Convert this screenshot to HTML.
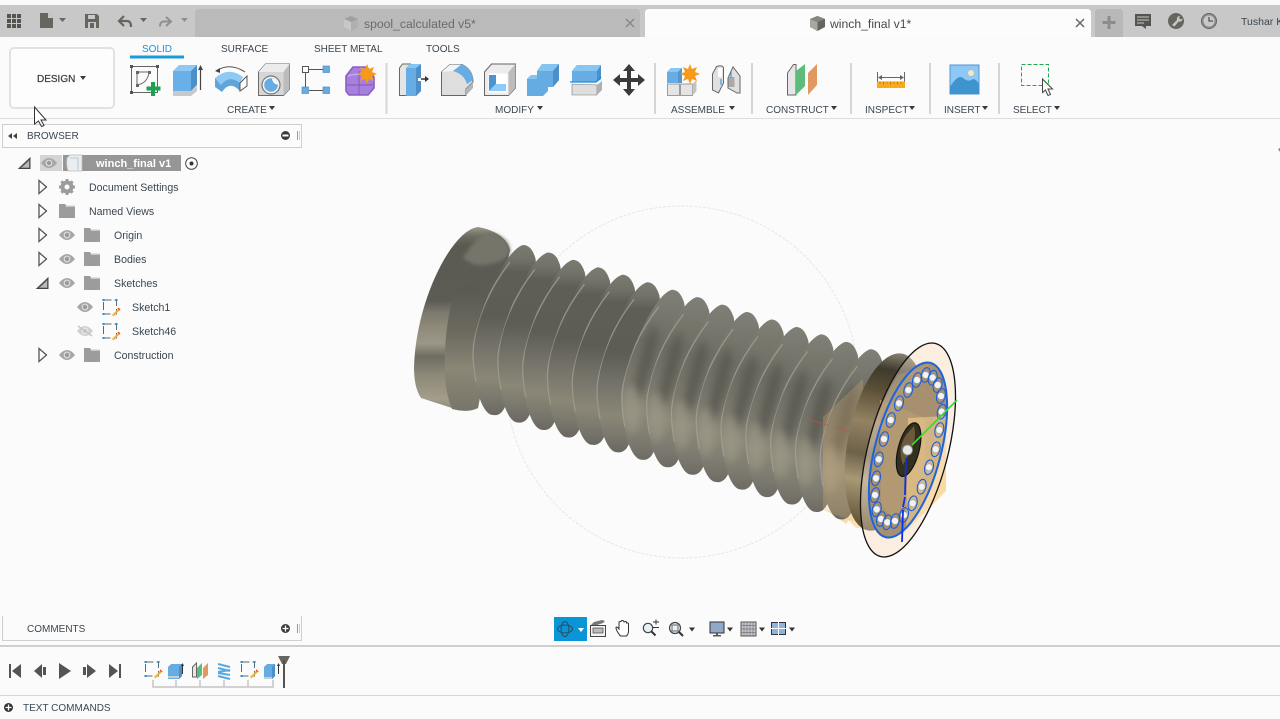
<!DOCTYPE html>
<html><head><meta charset="utf-8"><title>winch_final v1</title>
<style>
html,body{margin:0;padding:0;background:#fbfbfb;width:1280px;height:720px;overflow:hidden}
svg{display:block;position:absolute;left:0;top:0}
text{font-family:"Liberation Sans",Arial,sans-serif;font-size:10px;fill:#3c4650}
.t{font-size:10.6px}
</style></head><body>
<svg width="1280" height="720" viewBox="0 0 1280 720" xmlns="http://www.w3.org/2000/svg">
<defs>
<linearGradient id="gA" gradientUnits="userSpaceOnUse" x1="0" y1="245" x2="0" y2="416">
<stop offset="0" stop-color="#7b7b71"/><stop offset=".08" stop-color="#727269"/><stop offset=".16" stop-color="#5f5e56"/><stop offset=".42" stop-color="#5e5d55"/><stop offset=".6" stop-color="#75736a"/><stop offset=".78" stop-color="#8b8777"/><stop offset=".92" stop-color="#77756b"/><stop offset="1" stop-color="#68665e"/>
</linearGradient>
<linearGradient id="gB" gradientUnits="userSpaceOnUse" x1="0" y1="245" x2="0" y2="416">
<stop offset="0" stop-color="#808076"/><stop offset=".14" stop-color="#77776d"/><stop offset=".3" stop-color="#6f6e65"/><stop offset=".55" stop-color="#7d7a6f"/><stop offset=".72" stop-color="#8d897a"/><stop offset=".9" stop-color="#7b796f"/><stop offset="1" stop-color="#6c6a61"/>
</linearGradient>
<linearGradient id="capG" gradientUnits="userSpaceOnUse" x1="0" y1="227" x2="0" y2="412">
<stop offset="0" stop-color="#9a9988"/><stop offset=".05" stop-color="#6d6c62"/><stop offset=".1" stop-color="#5b5a52"/><stop offset=".4" stop-color="#5d5c54"/><stop offset=".46" stop-color="#7b786d"/><stop offset=".54" stop-color="#8f8979"/><stop offset=".63" stop-color="#9b9789"/><stop offset=".7" stop-color="#6f6c62"/><stop offset=".8" stop-color="#8e8977"/><stop offset=".93" stop-color="#a39d8b"/><stop offset="1" stop-color="#8a8675"/>
</linearGradient>
<linearGradient id="secG" gradientUnits="userSpaceOnUse" x1="0" y1="290" x2="0" y2="412">
<stop offset="0" stop-color="#5b5a52"/><stop offset=".35" stop-color="#6c6a60"/><stop offset=".65" stop-color="#8b8675"/><stop offset="1" stop-color="#77746a"/>
</linearGradient>
<linearGradient id="hubG" gradientUnits="userSpaceOnUse" x1="0" y1="352" x2="0" y2="535">
<stop offset="0" stop-color="#87816f"/><stop offset=".1" stop-color="#403a2c"/><stop offset=".22" stop-color="#5b5036"/><stop offset=".4" stop-color="#938263"/><stop offset=".58" stop-color="#6e624a"/><stop offset=".72" stop-color="#a79876"/><stop offset=".86" stop-color="#7f714f"/><stop offset="1" stop-color="#54462a"/>
</linearGradient>
<filter id="bl" x="-100%" y="-50%" width="300%" height="200%"><feGaussianBlur stdDeviation="4"/></filter>
<filter id="bs" x="-20%" y="-20%" width="140%" height="140%"><feGaussianBlur stdDeviation="1.800"/></filter>
<clipPath id="finClip"><path d="M523 245C505 250 478 310 472 350C473 385 482 415 493 415C505 417 508 400 512 380C522 330 540 270 535 257C532 248 528 245 523 245Z"/></clipPath>
<g id="finA">
<path d="M523 245C505 250 478 310 472 350C473 385 482 415 493 415C505 417 508 400 512 380C522 330 540 270 535 257C532 248 528 245 523 245Z" fill="url(#gA)"/>
<g clip-path="url(#finClip)">
<path d="M510 262C492 285 475 318 473 352C473 362 474 372 476 382" fill="none" stroke="#a09f92" stroke-width="1.400" opacity=".8"/>
</g>
</g>
<g id="finB">
<path d="M523 245C505 250 478 310 472 350C473 385 482 415 493 415C505 417 508 400 512 380C522 330 540 270 535 257C532 248 528 245 523 245Z" fill="url(#gB)"/>
<g clip-path="url(#finClip)">
<ellipse cx="497" cy="318" rx="7" ry="38" transform="rotate(14 497 318)" fill="#55554d" opacity=".72" filter="url(#bl)"/>
<ellipse cx="483" cy="365" rx="9" ry="24" fill="#a09b8a" opacity=".6" filter="url(#bl)"/>
<path d="M510 262C492 285 475 318 473 352C473 362 474 372 476 382" fill="none" stroke="#a2a195" stroke-width="1.300" opacity=".8"/>
</g>
</g>
<g id="eye"><path d="M-8 0Q0-10 8 0Q0 10-8 0Z" fill="#a6a6a6"/><circle r="3.400" fill="#dedede"/><circle r="2.200" fill="#999"/></g>
<g id="folder"><path d="M-8-7h6l1 1.500h9V7H-8Z" fill="#9c9c9c"/><rect x="-1" y="-5.500" width="9" height="1.500" fill="#c8c8c8"/></g>
<g id="tri"><path d="M-4-6.500L3.500 0L-4 6.500Z" fill="#fdfdfd" stroke="#555" stroke-width="1.300"/></g>
<g id="open"><path d="M-6 5.500L5-5V5.500Z" fill="#777" stroke="#444" stroke-width="1"/><path d="M-3 4.500L4-2V4.500Z" fill="#bbb"/></g>
<g id="sk"><rect x="-6.500" y="-7" width="13" height="14" fill="none" stroke="#666" stroke-width="1" stroke-dasharray="8 3"/><path d="M-7.500-8h2v2h-2zM5.500-8h2v2h-2zM-7.500 6h2v2h-2z" fill="#1f8fe0"/><path d="M2 8l6-6 1.500 1.500-6 6z" fill="#f3b23a"/><path d="M7.500 1.500l2 2 1-1-2-2z" fill="#e43"/></g>
<path id="cr" d="M0 0h6l-3 4z" fill="#3a3a3a"/>
<g id="ball"><ellipse rx="4.300" ry="7.500" fill="none" stroke="#1c5fd8" stroke-width="1.100"/><circle r="3.400" fill="#f2f3f5" stroke="#9aa0a6" stroke-width=".5"/></g>
</defs>

<rect width="1280" height="720" fill="#fbfbfb"/>
<!-- top bar -->
<rect y="5" width="1280" height="32" fill="#c8c8c8"/>
<path d="M195 37V13q0-4 4-4H636q4 0 4 4V37Z" fill="#bababa"/>
<path d="M645 37V13q0-4 4-4H1087q4 0 4 4V37Z" fill="#fcfcfc"/>
<path d="M1095 37V13q0-4 4-4h20q4 0 4 4V37Z" fill="#b8b8b8"/>
<path d="M1104 21h5v-5h3v5h5v3h-5v5h-3v-5h-5z" transform="translate(-1.500 0)" fill="#8c8c8c"/>
<g fill="#55554f"><rect x="7" y="14" width="4" height="4"/><rect x="12" y="14" width="4" height="4"/><rect x="17" y="14" width="4" height="4"/><rect x="7" y="19" width="4" height="4"/><rect x="12" y="19" width="4" height="4"/><rect x="17" y="19" width="4" height="4"/><rect x="7" y="24" width="4" height="4"/><rect x="12" y="24" width="4" height="4"/><rect x="17" y="24" width="4" height="4"/></g>
<path d="M40 13h8l5 5v10H40Z" fill="#66665f"/><path d="M48 13v5h5" fill="#c8c8c8"/>
<path d="M59 18h7l-3.500 4z" fill="#66665f"/>
<path d="M85 14h12l2 2v12H85Z" fill="#66665f"/><rect x="88" y="15" width="7" height="4" fill="#c8c8c8"/><rect x="88" y="22" width="8" height="6" fill="#c8c8c8"/><rect x="90" y="23" width="4" height="5" fill="#66665f"/>
<path d="M124 16l-5 5 5 5M119 21h8q4 0 4 6" fill="none" stroke="#66665f" stroke-width="2.200"/>
<path d="M140 18h7l-3.500 4z" fill="#66665f"/>
<path d="M166 17l5 4.500-5 4.500M171 21.500h-7q-4 0-4 5" fill="none" stroke="#8f8f8f" stroke-width="2"/>
<path d="M181 18h7l-3.500 4z" fill="#8f8f8f"/>
<path d="M344 19l7-3 7 3v8l-7 4-7-4z" fill="#a0a0a0"/><path d="M344 19l7 3 7-3v8l-7 4z" fill="#b0b0b0"/><path d="M344 19l7 3v9l-7-4z" fill="#c8c8c8"/>
<path d="M810 19l7.500-3 7.500 3v8l-7.500 4-7.500-4z" fill="#66665f"/><path d="M810 19l7.500 3v9l-7.500-4z" fill="#a8a8a2"/><path d="M810 19l7.500 3 7.500-3-7.500-3z" fill="#868680"/>
<text x="364" y="28" style="font-size:12.200px;fill:#6a6a6a">spool_calculated v5*</text>
<text x="830" y="28" style="font-size:12.200px;fill:#4a4a4a">winch_final v1*</text>
<path d="M626 19l8 8M634 19l-8 8" stroke="#8a8a8a" stroke-width="1.500"/>
<path d="M1076 19l8 8M1084 19l-8 8" stroke="#666" stroke-width="1.500"/>
<path d="M1135 14h16v12h-5v3l-4-3h-7z" fill="#55554f"/><path d="M1137 17h12M1137 20h12M1137 23h7" stroke="#c8c8c8"/>
<circle cx="1176" cy="21" r="8" fill="#66665f"/><path d="M1172 25l5-5a3 3 0 0 1 3-4l-1 2 1.500 1.500 2-1a3 3 0 0 1-4 3l-4 5z" fill="#c8c8c8"/>
<circle cx="1209" cy="21" r="7.500" fill="#8f8f8f" stroke="#66665f" stroke-width="1"/><circle cx="1209" cy="21" r="5.500" fill="#c8c8c8"/><path d="M1209 17v4h4" fill="none" stroke="#55554f" stroke-width="1.300"/>
<text x="1241" y="25" style="font-size:10.500px;fill:#3c4650">Tushar K</text>

<!-- toolbar -->
<rect x="10" y="48" width="104" height="60" rx="4" fill="#fdfdfd" stroke="#e2e2e2" stroke-width="2"/>
<text x="37" y="82" style="font-size:10px;fill:#3f3f3f;stroke:#3f3f3f;stroke-width:.25">DESIGN</text>
<use href="#cr" x="80" y="76"/>
<rect y="118" width="1280" height="1" fill="#dedede"/>
<text x="142" y="52" style="fill:#1b91dc">SOLID</text>
<text x="221" y="52">SURFACE</text>
<text x="314" y="52">SHEET METAL</text>
<text x="426" y="52">TOOLS</text>
<rect x="130" y="55.500" width="54" height="3" fill="#1a9ad9"/>
<text x="227" y="113">CREATE</text><use href="#cr" x="269" y="106"/>
<text x="495" y="113">MODIFY</text><use href="#cr" x="537" y="106"/>
<text x="671" y="113">ASSEMBLE</text><use href="#cr" x="729" y="106"/>
<text x="766" y="113">CONSTRUCT</text><use href="#cr" x="831" y="106"/>
<text x="865" y="113">INSPECT</text><use href="#cr" x="909" y="106"/>
<text x="944" y="113">INSERT</text><use href="#cr" x="982" y="106"/>
<text x="1013" y="113">SELECT</text><use href="#cr" x="1054" y="106"/>
<g fill="#d6d6d6"><rect x="385.500" y="63" width="2" height="51"/><rect x="654" y="63" width="2" height="51"/><rect x="751" y="63" width="2" height="51"/><rect x="850" y="63" width="2" height="51"/><rect x="929" y="63" width="2" height="51"/><rect x="998" y="63" width="2" height="51"/></g>

<!-- create sketch -->
<rect x="131.500" y="66.500" width="26" height="26" fill="none" stroke="#666" stroke-width="1"/>
<path d="M130 65h3v3h-3zM156 65h3v3h-3zM130 91h3v3h-3z" fill="#555"/>
<path d="M137 72h12M137 72v13M149 72q-1 11-12 13" fill="none" stroke="#666" stroke-width="1"/>
<path d="M136 71h3v3h-3zM148 71h3v3h-3zM136 84h3v3h-3z" fill="#666"/>
<path d="M151 82h4v4.500h5.500v4H155V96h-4v-5.500h-4.500v-4H151z" fill="#1fa04c"/>
<!-- extrude -->
<rect x="173" y="71" width="18" height="20" fill="#6ab0e8"/>
<path d="M173 71l6-6h18l-6 6z" fill="#8ec8f5"/><path d="M191 71l6-6v20l-6 6z" fill="#4d8fc8"/>
<path d="M173 91h18l6-5v5l-6 5h-18z" fill="#c9c9c9"/>
<path d="M200.500 90V68" stroke="#444" stroke-width="1.200"/><path d="M198 70l2.500-5 2.500 5z" fill="#444"/>
<!-- revolve -->
<path d="M216 71Q230 62 245 72" fill="none" stroke="#555" stroke-width="1"/><path d="M215 71l5-3v5z" fill="#444"/>
<path d="M215 78Q229 66 243 77L240 83Q229 74 221 85Z" fill="#8fcaf4"/>
<path d="M215 78L221 85Q229 74 240 83V91Q230 80 222 92L215 87Z" fill="#5ea5dc"/>
<path d="M240 83L247 76V86L240 91Z" fill="#fff" stroke="#555" stroke-width="1"/>
<!-- hole -->
<path d="M258.500 72l7-8h24v25l-6 6.500h-25z" fill="#d6d6d6" stroke="#6a6a6a" stroke-width="1"/>
<path d="M283.500 72l6-8v25l-6 6.500z" fill="#bcbcbc"/><path d="M258.500 72l7-8h24l-6 8z" fill="#ececec"/>
<circle cx="271" cy="85" r="9" fill="#f2f2f2" stroke="#777" stroke-width="1.200"/><circle cx="271" cy="85" r="6.800" fill="#65ace4"/><path d="M272 78.500a7 7 0 0 1 6 6q-5 0-6-6z" fill="#fff"/>
<!-- pattern -->
<rect x="302.500" y="66.500" width="6" height="6" fill="#fff" stroke="#555"/>
<rect x="323" y="66" width="6.500" height="6.500" fill="#65ace4" stroke="#4a8fc8" stroke-width=".7"/><rect x="302" y="87" width="6.500" height="6.500" fill="#65ace4" stroke="#4a8fc8" stroke-width=".7"/><rect x="323" y="87" width="6.500" height="6.500" fill="#65ace4" stroke="#4a8fc8" stroke-width=".7"/>
<path d="M309 69.500h14M309 90.500h14M305.500 73v14" stroke="#555" stroke-width="1"/>
<!-- purple -->
<path d="M346 76l7-9h14l7 10v11l-6 7h-19l-3-4z" fill="#a77fdc" stroke="#8a5fc4" stroke-width="1.600" stroke-linejoin="round"/>
<path d="M346 85h27M359 71v24" stroke="#8258bb" stroke-width=".9"/><path d="M348 76q11-4 21 1" fill="none" stroke="#c6a8ee" stroke-width="1.500"/>
<path d="M367 64l2 5 5-2-2 5 5 2-5 2 2 5-5-2-2 5-2-5-5 2 2-5-5-2 5-2-2-5 5 2z" fill="#f79a1c"/>
<!-- press pull -->
<path d="M399.500 95.500V68l3-4h8v31.500z" fill="#e5e5e5" stroke="#666" stroke-width="1"/>
<path d="M406 68l4-4h11v27l-5 5h-10z" fill="#67ace2"/><path d="M416 68l5-4v27l-5 5z" fill="#4d8fc8"/><path d="M406 68l4-4h11l-5 4z" fill="#85c3f1"/>
<path d="M419 79h7" stroke="#333" stroke-width="1.500"/><path d="M425 76l4 3-4 3z" fill="#333"/><rect x="418" y="78" width="3" height="3" fill="#fff"/>
<!-- fillet -->
<path d="M441.500 95.500V72L450 64.500H462Q473 70 473 82L466 89V95.500Z" fill="#dedede" stroke="#666" stroke-width="1"/>
<path d="M441.500 72L450 64.500H462L453 71Z" fill="#f4f4f4"/>
<path d="M453 71L462 64Q473 70 473 80L467 84Q464 74 453 71Z" fill="#67ace2"/>
<path d="M466 89L473 82V88L466 95.500Z" fill="#b5b5b5"/>
<!-- shell -->
<path d="M484.500 95.500V72l7-8h24v24l-7 7.500z" fill="#ececec" stroke="#666" stroke-width="1"/>
<path d="M508.500 72l7-8v24l-7 7.500z" fill="#bcbcbc"/>
<rect x="488.500" y="73.500" width="19" height="19" fill="#fff"/>
<path d="M489 75h7v9l-7 7z" fill="#4d93cf"/><path d="M489 91l7-7h10v7z" fill="#8ecaf6"/>
<!-- combine -->
<path d="M527 79l4-4h6V71l5-7h17V80l-6 7h-5V91l-5 5H527Z" fill="#65ace2"/>
<path d="M537 71l5-7h17l-6 7z" fill="#85c3f1"/><path d="M553 71l6-7v16l-6 7z" fill="#4d8fc8"/><path d="M527 79l4-4h6v4z" fill="#85c3f1"/>
<!-- offset plane -->
<path d="M572 71l5-6h24v14l-4 3h-25z" fill="#67ace2"/><path d="M572 71l5-6h24l-4 6z" fill="#88c6f4"/><path d="M597 71l4-6v14l-4 3z" fill="#4d8fc8"/>
<path d="M572 84v11h25v-10z" fill="#dedede" stroke="#777" stroke-width=".6"/><path d="M597 85l5-4v9l-5 5z" fill="#b0b0b0"/>
<path d="M570 82h26l5-5" fill="none" stroke="#1a8fe0" stroke-width="1.300"/>
<!-- move -->
<path d="M629 64l6 7h-4v7h7v-4l7 6-7 6v-4h-7v7h4l-6 7-6-7h4v-7h-7v4l-7-6 7-6v4h7v-7h-4z" fill="#3a3a3a"/>
<!-- assemble new -->
<path d="M667 72l4-4h11v15h-15z" fill="#67ace2"/><path d="M667 72l4-4h11l-4 4z" fill="#88c6f4"/><path d="M678 72l4-4v15h-4z" fill="#4d8fc8" opacity=".7"/>
<rect x="667.500" y="84" width="12" height="11.500" fill="#e4e4e4" stroke="#888" stroke-width=".8"/><rect x="680.500" y="84" width="12" height="11.500" fill="#e4e4e4" stroke="#888" stroke-width=".8"/><path d="M692.500 84l4-4v11l-4 4.500z" fill="#c4c4c4"/>
<path d="M690 64l2 5 5-2-2 5 5 2-5 2 2 5-5-2-2 5-2-5-5 2 2-5-5-2 5-2-2-5 5 2z" fill="#f79a1c"/>
<!-- joint -->
<path d="M712.500 74l4-7.500q5-2 7 1V83l-5 10-6-3z" fill="#e0e0e0" stroke="#666" stroke-width="1"/>
<path d="M728 78l5-11 7 9v17l-3 0-9-5z" fill="#e0e0e0" stroke="#666" stroke-width="1"/>
<rect x="728.500" y="77" width="6" height="10" fill="#aaa"/><rect x="718" y="68" width="4" height="9" fill="#fff"/>
<path d="M721 79v6M731 72v6" stroke="#1a8fe0"/>
<!-- construct -->
<path d="M787.500 95V73l6-8.500h2.500V95Z" fill="#e6e6e6" stroke="#666" stroke-width="1"/>
<path d="M796 71l9-7v22l-9 9z" fill="#5cbd7b"/>
<path d="M808 73l9-9v21l-9 10z" fill="#e09a60"/>
<!-- inspect -->
<path d="M877.500 72v13M904.500 72v13M879 77.500h24" stroke="#666" stroke-width="1" fill="none"/><path d="M878 77.500l4-2.500v5zM904 77.500l-4-2.500v5z" fill="#666"/>
<rect x="877" y="81.500" width="28" height="6.500" fill="#f8aa18"/><path d="M880 81.500v2M883.500 81.500v3M887 81.500v2M890.500 81.500v3M894 81.500v2M897.500 81.500v3M901 81.500v2" stroke="#a06a10" stroke-width=".7"/>
<!-- insert -->
<rect x="950" y="65" width="29" height="29" fill="#8ec8f6" stroke="#4f96d2" stroke-width="1"/>
<path d="M950 87q8-13 13-9t8 2q4-3 8 4v10h-29z" fill="#3f93ce"/>
<circle cx="971" cy="73" r="3.300" fill="#efe8d0" stroke="#b8bab0" stroke-width=".6"/>
<!-- select -->
<rect x="1021.500" y="64.500" width="27" height="21" fill="none" stroke="#21a84f" stroke-width="1" stroke-dasharray="4 2"/>
<path d="M1042.500 79v13.500l3-2.500 2.500 5.500 2.500-1-2.500-5.500h4.500z" fill="#fff" stroke="#444" stroke-width="1"/>

<!-- browser panel -->
<rect x="2.500" y="124.500" width="299" height="23" fill="#fcfcfc" stroke="#cfcfcf"/>
<path d="M12 133l-4 3 4 3zM17 133l-4 3 4 3z" fill="#444"/>
<text x="27" y="139">BROWSER</text>
<circle cx="285.500" cy="135.500" r="4.500" fill="#3a3a3a"/><rect x="282.500" y="134.500" width="6" height="2" fill="#fff"/>
<path d="M297.500 131v9" stroke="#999"/><path d="M299.500 131v9" stroke="#ccc"/>
<use href="#open" x="25" y="163"/>
<rect x="40" y="155" width="22" height="16" fill="#d4d4d4"/><rect x="63" y="155" width="118" height="16" fill="#969696"/>
<use href="#eye" x="49" y="163"/>
<path d="M67 158l3-3h12v16H68q-2-6-1-13z" fill="#e8eef2" stroke="#bbb" stroke-width=".7"/><path d="M70 158h8v12" fill="none" stroke="#bfc8cc"/>
<text x="96" y="167" style="font-size:11px;font-weight:bold;fill:#fff">winch_final v1</text>
<circle cx="191.500" cy="163.500" r="5.800" fill="#fff" stroke="#444" stroke-width="1"/><circle cx="191.500" cy="163.500" r="2" fill="#333"/>
<text class="t" x="89" y="191">Document Settings</text>
<text class="t" x="89" y="215">Named Views</text>
<text class="t" x="114" y="239">Origin</text>
<text class="t" x="114" y="263">Bodies</text>
<text class="t" x="114" y="287">Sketches</text>
<text class="t" x="132" y="311">Sketch1</text>
<text class="t" x="132" y="335">Sketch46</text>
<text class="t" x="114" y="359">Construction</text>
<use href="#tri" x="43" y="187"/><use href="#tri" x="43" y="211"/><use href="#tri" x="43" y="235"/><use href="#tri" x="43" y="259"/><use href="#open" x="43" y="283"/><use href="#tri" x="43" y="355"/>
<g transform="translate(67 187)"><circle r="4.500" fill="none" stroke="#9c9c9c" stroke-width="4"/><path d="M-1.500-8h3v3h-3zM-1.500 5h3v3h-3zM-8-1.500h3v3h-3zM5-1.500h3v3h-3z" fill="#9c9c9c"/><path d="M-1.500-8h3v3h-3zM-1.500 5h3v3h-3zM-8-1.500h3v3h-3zM5-1.500h3v3h-3z" fill="#9c9c9c" transform="rotate(45)"/></g>
<use href="#folder" x="67" y="211"/>
<use href="#eye" x="67" y="235"/><use href="#folder" x="92" y="235"/>
<use href="#eye" x="67" y="259"/><use href="#folder" x="92" y="259"/>
<use href="#eye" x="67" y="283"/><use href="#folder" x="92" y="283"/>
<use href="#eye" x="85" y="307"/><use href="#sk" x="110" y="307"/>
<g opacity=".5"><use href="#eye" x="85" y="331"/></g><path d="M78 326l14 10" stroke="#c4c4c4" stroke-width="1.500"/><use href="#sk" x="110" y="331"/>
<use href="#eye" x="67" y="355"/><use href="#folder" x="92" y="355"/>

<path d="M34.500 107v17l4-3 3 5.500 2.500-1-3-5.500h5z" fill="#fff" stroke="#333" stroke-width="1"/>
<path d="M1278 149l2-1v4z" fill="#888"/>

<!-- 3D model -->
<circle cx="682" cy="382" r="176" fill="none" stroke="#e6e6e6" stroke-width="1" stroke-dasharray="3 1.500"/>
<path d="M908 420l38-4v75l-40 42-50-5-8-8z" fill="#fbe3b4"/>
<path d="M826 510L850 518L846 524Z" fill="#f8ddb0"/>
<!-- end cap -->
<path d="M478 227C452 230 416 300 414 367Q414 388 421 398L455 409Q468 413 478 408L500 300L510 250Q505 232 478 227Z" fill="url(#capG)"/>
<path d="M455 290C446 320 444 350 445 375Q446 395 452 409Q468 413 478 408L490 340L480 280Z" fill="url(#secG)"/>
<path d="M463 258Q478 232 492 233Q510 238 510 252Q505 262 490 264Q475 268 463 258Z" fill="#75756b" filter="url(#bs)"/>
<!-- fins -->
<use href="#finA"/>
<use href="#finA" x="24.800" y="7.450"/>
<use href="#finA" x="49.600" y="14.900"/>
<use href="#finA" x="74.400" y="22.350"/>
<use href="#finA" x="99.200" y="29.800"/>
<use href="#finA" x="124" y="37.250"/>
<use href="#finB" x="148.800" y="44.700"/>
<use href="#finB" x="173.600" y="52.150"/>
<use href="#finB" x="198.400" y="59.600"/>
<use href="#finB" x="223.200" y="67.050"/>
<use href="#finB" x="248" y="74.500"/>
<use href="#finB" x="272.800" y="81.950"/>
<use href="#finB" x="297.600" y="89.400"/>
<use href="#finB" x="322.400" y="96.850"/>
<use href="#finB" x="347.200" y="104.300"/>
<!-- tinted plane over last fins -->
<path d="M823 417L863 379V525L823 510Z" fill="#e8b870" opacity=".25"/>
<path d="M810 420l90 27" stroke="#c05050" stroke-width="1" stroke-dasharray="20 6" opacity=".75"/>
<!-- hub -->
<ellipse cx="885" cy="442" rx="37" ry="90" transform="rotate(11 885 442)" fill="url(#hubG)"/>
<ellipse cx="908" cy="450" rx="40" ry="110" transform="rotate(14.500 908 450)" fill="#fbe8d6" opacity=".7"/>
<ellipse cx="885" cy="442" rx="37" ry="90" transform="rotate(11 885 442)" fill="url(#hubG)" opacity=".45"/>
<ellipse cx="908" cy="450" rx="33" ry="90" transform="rotate(14.500 908 450)" fill="#a69070"/>
<path d="M880 400l45 18 0 70-32 30-12-12z" fill="#b59a72" opacity=".9"/>
<path d="M908 418l38-2 0 74-40 40z" fill="#f6d493" opacity=".55"/>
<path d="M868 450q4-30 30-75l32-12-42 58-20 30z" fill="#bda987" opacity=".35"/>
<ellipse cx="908" cy="450" rx="33" ry="90" transform="rotate(14.500 908 450)" fill="none" stroke="#1c64dc" stroke-width="2"/>
<ellipse cx="908" cy="450" rx="40" ry="110" transform="rotate(14.500 908 450)" fill="none" stroke="#111" stroke-width="1.300"/>
<ellipse cx="908.500" cy="449.500" rx="10.500" ry="27.500" transform="rotate(14.500 908 450)" fill="#33301f" stroke="#111" stroke-width="1.200"/>
<path d="M903 465q-6-16 3-30l8-9q3 12-3 24z" fill="#6b5a3b"/>
<!-- balls -->
<use href="#ball" x="925.700" y="375" transform="rotate(14 925.700 375)"/>
<use href="#ball" x="932.700" y="377.700" transform="rotate(14 932.700 377.700)"/>
<use href="#ball" x="917" y="380" transform="rotate(14 917 380)"/>
<use href="#ball" x="937.700" y="385" transform="rotate(14 937.700 385)"/>
<use href="#ball" x="908.300" y="390" transform="rotate(14 908.300 390)"/>
<use href="#ball" x="941" y="396" transform="rotate(14 941 396)"/>
<use href="#ball" x="899" y="403.300" transform="rotate(14 899 403.300)"/>
<use href="#ball" x="941.700" y="411.700" transform="rotate(14 941.700 411.700)"/>
<use href="#ball" x="890.700" y="420" transform="rotate(14 890.700 420)"/>
<use href="#ball" x="939.300" y="430" transform="rotate(14 939.300 430)"/>
<use href="#ball" x="884" y="439" transform="rotate(14 884 439)"/>
<use href="#ball" x="935.700" y="449.300" transform="rotate(14 935.700 449.300)"/>
<use href="#ball" x="878.700" y="459.300" transform="rotate(14 878.700 459.300)"/>
<use href="#ball" x="929" y="467.300" transform="rotate(14 929 467.300)"/>
<use href="#ball" x="876" y="478.300" transform="rotate(14 876 478.300)"/>
<use href="#ball" x="921.700" y="486.700" transform="rotate(14 921.700 486.700)"/>
<use href="#ball" x="875" y="495" transform="rotate(14 875 495)"/>
<use href="#ball" x="912.700" y="503.300" transform="rotate(14 912.700 503.300)"/>
<use href="#ball" x="876.700" y="509.300" transform="rotate(14 876.700 509.300)"/>
<use href="#ball" x="904" y="515" transform="rotate(14 904 515)"/>
<use href="#ball" x="881" y="519" transform="rotate(14 881 519)"/>
<use href="#ball" x="887.300" y="522.300" transform="rotate(14 887.300 522.300)"/>
<use href="#ball" x="895" y="521" transform="rotate(14 895 521)"/>
<!-- axes -->
<path d="M912 445L957 400" stroke="#2fe02f" stroke-width="1.600"/>
<path d="M906 458L905 495M905 497L903 507M903 510L902 542" stroke="#1030e0" stroke-width="1.800" fill="none"/>
<circle cx="907.500" cy="450" r="5" fill="#e6e8ea" stroke="#8a8a8a" stroke-width=".8"/>

<!-- comments panel -->
<path d="M2.500 616v24.500h299V616" fill="none" stroke="#cfcfcf"/>
<text x="27" y="632">COMMENTS</text>
<circle cx="285.500" cy="628.500" r="4.500" fill="#3a3a3a"/><path d="M282.500 628.500h6M285.500 625.500v6" stroke="#fff" stroke-width="1.300"/>
<path d="M297.500 624v9" stroke="#999"/><path d="M299.500 624v9" stroke="#ccc"/>

<!-- nav bar -->
<rect x="554" y="617" width="33" height="24" fill="#0a96d6"/>
<g fill="none" stroke="#2c4a5e" stroke-width="1"><ellipse cx="565" cy="629" rx="4" ry="7.500"/><ellipse cx="565" cy="629" rx="7.500" ry="4"/></g>
<path d="M578 628h6l-3 4z" fill="#fff"/>
<rect x="590.500" y="625.500" width="15" height="11" fill="#f4f4f4" stroke="#444"/><rect x="593" y="628" width="10" height="5" fill="#bbb" stroke="#444" stroke-width=".7"/><path d="M591 625l3-3 8-2 3 1-2 2-6 2z" fill="#777"/>
<path d="M619 634q-3-4-3-6t2 0l1 1v-7q2-1 2 0v-1q2-1 2.500 0l.5 1q2-1 2.500 0v1q2-.5 2 1v7q0 3-2 5h-6q-1-1-1.500-2z" fill="#fff" stroke="#333" stroke-width="1"/>
<circle cx="648" cy="628" r="4.700" fill="#e8f0f5" stroke="#444" stroke-width="1.200"/><path d="M651.500 631.500l4 4" stroke="#333" stroke-width="2"/><path d="M653 622h6M656 619.500v5M653 627.500h6" stroke="#333" stroke-width="1"/>
<circle cx="675" cy="628" r="5.500" fill="#e8f0f5" stroke="#444" stroke-width="1.200"/><rect x="672" y="625" width="6" height="6" fill="none" stroke="#666"/><path d="M679 632l4 4" stroke="#333" stroke-width="2"/><path d="M689 627.500h6l-3 4z" fill="#333"/>
<rect x="710" y="622" width="14" height="11" fill="#8fa9c7" stroke="#333"/><path d="M713 635h8v1.500h-8z" fill="#555"/><path d="M716 633h2v2h-2z" fill="#555"/><path d="M727 627.500h6l-3 4z" fill="#333"/>
<rect x="741" y="622" width="15" height="14" fill="#c6c6cf" stroke="#555"/><path d="M744 622v14M747 622v14M750 622v14M753 622v14M741 625.500h15M741 629h15M741 632.500h15" stroke="#777" stroke-width=".7"/><path d="M759 627.500h6l-3 4z" fill="#333"/>
<rect x="771.500" y="622.500" width="14" height="12" fill="#8fb4dc" stroke="#334"/><path d="M778.500 622v13M771 628.500h15" stroke="#fff" stroke-width="1"/><path d="M789 627.500h6l-3 4z" fill="#333"/>

<!-- timeline -->
<rect y="645" width="1280" height="2" fill="#cfcfcf"/>
<rect y="695" width="1280" height="1" fill="#d6d6d6"/>
<rect y="719" width="1280" height="1" fill="#d6d6d6"/>
<g fill="#55554f">
<rect x="9" y="664" width="2" height="14"/><path d="M21 664v14l-9-7z"/>
<path d="M42 664v14l-8-7z"/><rect x="43" y="667" width="3" height="8"/>
<path d="M59 663l12 8-12 8z"/>
<rect x="83" y="667" width="3" height="8"/><path d="M87 664v14l9-7z"/>
<path d="M109 664v14l9-7z"/><rect x="119" y="664" width="2" height="14"/>
</g>
<use href="#sk" x="152" y="669"/>
<path d="M168 667l3-3h11v12l-3 3h-11z" fill="#65ace2"/><path d="M179 667l3-3v12l-3 3z" fill="#4d8fc8"/><rect x="168" y="676" width="11" height="2" fill="#ccc"/><path d="M182.500 674v-9" stroke="#333"/><path d="M181 666l1.500-3 1.500 3z" fill="#333"/>
<path d="M192.500 677v-10l4-4v14z" fill="#e6e6e6" stroke="#666"/><path d="M197 668l5-5v12l-5 4z" fill="#5cbd7b"/><path d="M203 668l5-5v12l-5 4z" fill="#e09a60"/>
<path d="M218 664l12 3M218 672l12-2M218 676l12 3M218 668l12 3M218 673l12 2" stroke="#5aa8e0" stroke-width="2"/>
<use href="#sk" x="248" y="669"/>
<path d="M264 667l3-3h8v12l-3 3h-8z" fill="#65ace2"/><path d="M272 667l3-3v12l-3 3z" fill="#4d8fc8"/><rect x="264" y="677" width="8" height="2" fill="#ccc"/><path d="M278.500 674v-9" stroke="#333"/><path d="M277 666l1.500-3 1.500 3z" fill="#333"/>
<path d="M153 680v7h120v-7M176 680v7M200 680v7M224 680v7M248 680v7" fill="none" stroke="#c4c4c4" stroke-width="1.500"/>
<path d="M278 656h12l-4 8h-4z" fill="#66665f"/><rect x="283" y="660" width="2" height="28" fill="#55554f"/>

<circle cx="8.500" cy="707.500" r="4.500" fill="#333"/><path d="M5.500 707.500h6M8.500 704.500v6" stroke="#fff" stroke-width="1.300"/>
<text x="23" y="711">TEXT COMMANDS</text>
</svg>
</body></html>
